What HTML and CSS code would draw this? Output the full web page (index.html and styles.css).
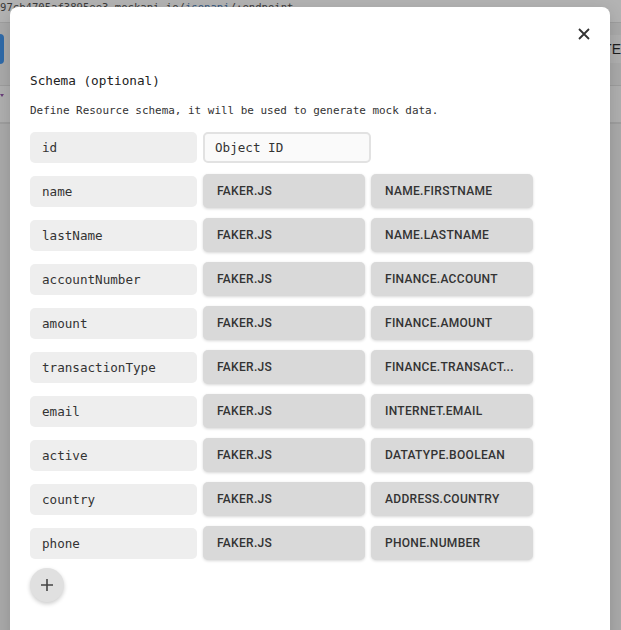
FILE: index.html
```html
<!DOCTYPE html>
<html>
<head>
<meta charset="utf-8">
<link rel="stylesheet" href="styles.css">
</head>
<body>
<div class="page">
  <div class="urlbar"><span class="url">97cb4705af3895ee3.mockapi.io/<span class="link">jsonapi</span>/:endpoint</span></div>
  <div class="toolbar">
    <span class="blue-btn"></span>
    <span class="te">TE</span>
  </div>
  <div class="subbar"><span class="caret"></span></div>
</div>

<div class="modal">
  <div class="modal-head">
    <button class="close" aria-label="close">
      <svg width="12" height="12" viewBox="0 0 12 12"><path d="M1 1L11 11M11 1L1 11" stroke="#333" stroke-width="1.8" fill="none"/></svg>
    </button>
  </div>
  <h2 class="title">Schema (optional)</h2>
  <p class="desc">Define Resource schema, it will be used to generate mock data.</p>

  <div class="rows">
    <div class="row">
      <div class="field">id</div>
      <div class="input">Object ID</div>
    </div>
    <div class="row">
      <div class="field">name</div>
      <div class="btn">FAKER.JS</div>
      <div class="btn">NAME.FIRSTNAME</div>
    </div>
    <div class="row">
      <div class="field">lastName</div>
      <div class="btn">FAKER.JS</div>
      <div class="btn">NAME.LASTNAME</div>
    </div>
    <div class="row">
      <div class="field">accountNumber</div>
      <div class="btn">FAKER.JS</div>
      <div class="btn">FINANCE.ACCOUNT</div>
    </div>
    <div class="row">
      <div class="field">amount</div>
      <div class="btn">FAKER.JS</div>
      <div class="btn">FINANCE.AMOUNT</div>
    </div>
    <div class="row">
      <div class="field">transactionType</div>
      <div class="btn">FAKER.JS</div>
      <div class="btn">FINANCE.TRANSACT...</div>
    </div>
    <div class="row">
      <div class="field">email</div>
      <div class="btn">FAKER.JS</div>
      <div class="btn">INTERNET.EMAIL</div>
    </div>
    <div class="row">
      <div class="field">active</div>
      <div class="btn">FAKER.JS</div>
      <div class="btn">DATATYPE.BOOLEAN</div>
    </div>
    <div class="row">
      <div class="field">country</div>
      <div class="btn">FAKER.JS</div>
      <div class="btn">ADDRESS.COUNTRY</div>
    </div>
    <div class="row">
      <div class="field">phone</div>
      <div class="btn">FAKER.JS</div>
      <div class="btn">PHONE.NUMBER</div>
    </div>
  </div>

  <button class="add" aria-label="add">
    <svg width="14" height="14" viewBox="0 0 14 14"><path d="M7 1V13M1 7H13" stroke="#444" stroke-width="1.6" fill="none"/></svg>
  </button>
</div>
</body>
</html>
```

FILE: styles.css
```css
html, body {
  margin: 0;
  padding: 0;
  height: 100%;
  overflow: hidden;
}
body {
  background: #a9a9a9;
  font-family: "DejaVu Sans Mono", "Liberation Mono", monospace;
}

.page {
  display: flex;
  flex-direction: column;
}
.urlbar {
  height: 22px;
  background: #b3b3b3;
  border-bottom: 1px solid #9e9e9e;
  overflow: hidden;
  white-space: nowrap;
}
.url {
  display: block;
  font-size: 10.6px;
  line-height: 12px;
  padding-top: 1px;
  color: #3a3a3a;
}
.link {
  color: #34577f;
  text-decoration: underline;
}
.toolbar {
  height: 62px;
  display: flex;
  align-items: flex-start;
  justify-content: space-between;
  border-bottom: 1px solid #9d9d9d;
}
.blue-btn {
  margin-top: 11px;
  width: 4px;
  height: 30px;
  background: #2f6aa8;
  border-radius: 0 5px 5px 0;
}
.te {
  margin-top: 12px;
  height: 28px;
  line-height: 28px;
  padding: 0 0 0 2px;
  background: #afafaf;
  font-family: "Liberation Sans", Arial, sans-serif;
  font-size: 14px;
  color: #1e1e1e;
}
.subbar {
  height: 36px;
  background: #afafaf;
  border-bottom: 2px solid #9e9e9e;
}
.caret {
  display: block;
  width: 0;
  height: 0;
  margin-top: 8px;
  border-left: 2px solid transparent;
  border-right: 2px solid transparent;
  border-top: 3px solid #6a3f7a;
}

.modal {
  position: absolute;
  left: 10px;
  top: 7px;
  width: 560px;
  height: 640px;
  padding: 15px 20px 0 20px;
  background: #fff;
  border-radius: 8px;
  box-shadow: 0 4px 16px rgba(0,0,0,0.15);
}
.modal-head {
  height: 24px;
  display: flex;
  justify-content: flex-end;
  align-items: center;
}
.close {
  margin-right: -1px;
  width: 14px;
  height: 14px;
  padding: 0;
  border: 0;
  background: transparent;
  display: flex;
  align-items: center;
  justify-content: center;
}
.title {
  margin: 27px 0 0 0;
  font-size: 12.7px;
  line-height: 16px;
  font-weight: normal;
  color: #222;
}
.desc {
  margin: 15px 0 0 0;
  font-size: 10.95px;
  line-height: 14px;
  color: #333;
}

.rows {
  margin-top: 12px;
  display: flex;
  flex-direction: column;
  gap: 10px;
}
.row {
  height: 34px;
  display: flex;
  align-items: center;
  gap: 6px;
}
.field {
  box-sizing: border-box;
  width: 167px;
  height: 31px;
  padding-left: 12px;
  display: flex;
  align-items: center;
  background: #eeeeee;
  border-radius: 5px;
  font-size: 12.6px;
  color: #333;
}
.field, .input {
  flex: none;
}
.input {
  box-sizing: border-box;
  width: 168px;
  height: 31px;
  padding-left: 10px;
  display: flex;
  align-items: center;
  background: #fafafa;
  border: 2px solid #e2e2e2;
  border-radius: 5px;
  font-size: 12.6px;
  color: #333;
}
.btn {
  box-sizing: border-box;
  flex: none;
  width: 162px;
  height: 34px;
  line-height: 34px;
  padding: 0 14px;
  background: #d9d9d9;
  border-radius: 5px;
  box-shadow: 0 1px 3px rgba(0,0,0,0.16);
  font-family: Roboto, "Liberation Sans", Arial, sans-serif;
  font-weight: 500;
  font-size: 12px;
  letter-spacing: 0.3px;
  color: #333;
  white-space: nowrap;
  overflow: hidden;
}

.add {
  margin-top: 8px;
  width: 34px;
  height: 34px;
  padding: 0;
  border: 0;
  border-radius: 50%;
  background: #e0e0e0;
  box-shadow: 0 2px 4px rgba(0,0,0,0.2);
  display: flex;
  align-items: center;
  justify-content: center;
}
```
